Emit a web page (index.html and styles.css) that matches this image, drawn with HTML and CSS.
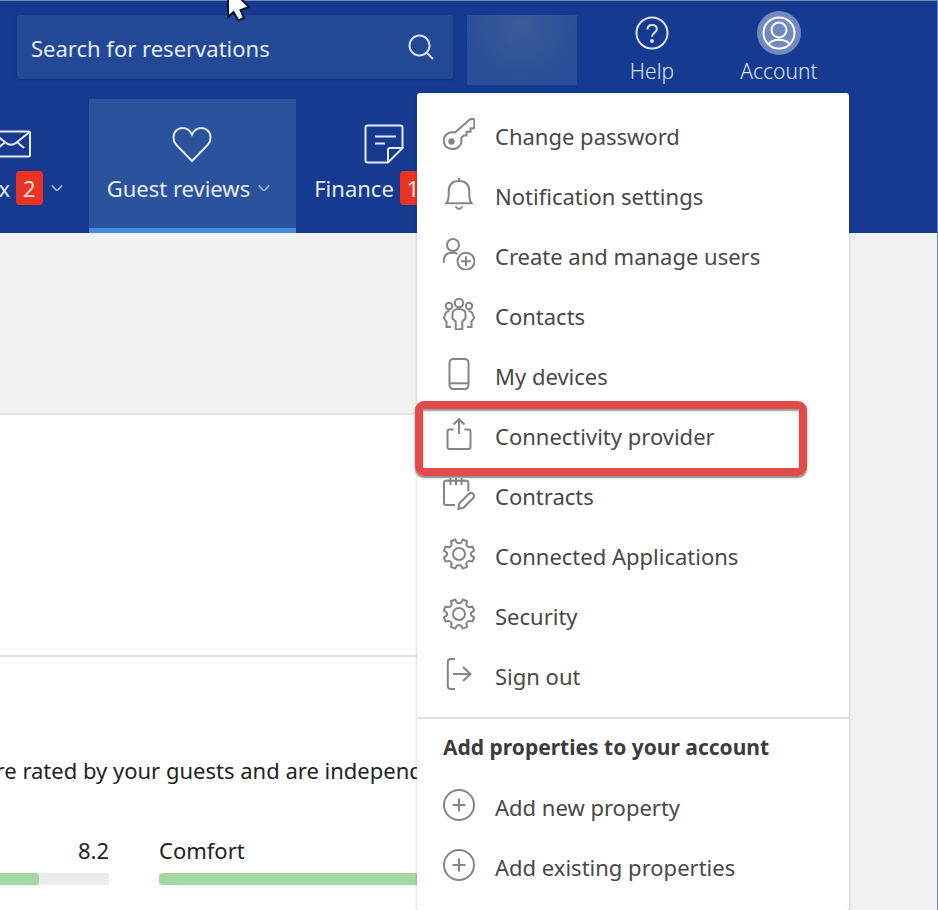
FILE: index.html
```html
<!DOCTYPE html>
<html lang="en">
<head>
<meta charset="utf-8">
<meta name="viewport" content="width=device-width, initial-scale=1">
<title>Guest reviews</title>
<link rel="stylesheet" href="styles.css">
</head>
<body>
<svg class="defs" aria-hidden="true">
  <symbol id="gear" viewBox="0 0 32 32">
    <path d="M12.200 1.500L13.800 4.600Q16 5.700 18.200 4.600L19.800 1.500L24 3.200L23.300 6.500Q23.800 8.600 26 9.200L29.500 8.700L31.200 12.600L28.500 14.400Q27.200 16 28.500 17.700L31.200 19.500L29.500 23.400L26 22.900Q23.900 23.400 23.300 25.500L24 28.900L19.800 30.600L18.200 27.800Q16 26.400 13.800 27.800L12.200 30.600L8 28.900L8.700 25.500Q8.100 23.400 6 22.900L2.500 23.400L.8 19.500L3.500 17.700Q4.800 16 3.500 14.400L.8 12.600L2.500 8.700L6 9.200Q8.200 8.600 8.700 6.500L8 3.200Z"/>
    <circle cx="16" cy="16" r="6"/>
  </symbol>
  <symbol id="plus" viewBox="0 0 32 32">
    <circle cx="16" cy="16" r="15"/><path d="M9.500 16h13M16 9.500v13"/>
  </symbol>
  <symbol id="chevron" viewBox="0 0 14 8"><path d="M1 1L5.500 5.800Q7 7.200 8.500 5.800L13 1"/></symbol>
</svg>

<header class="header">
  <div class="topbar">
    <form class="search" role="search">
      <input class="search-input" type="search" aria-label="Search for reservations" placeholder="Search for reservations">
      <button class="search-button" type="button" aria-label="Search">
        <svg class="search-icon" viewBox="0 0 26 26"><circle cx="11.500" cy="11.500" r="10"/><path d="M18.500 18.500l6.500 6.500"/></svg>
      </button>
    </form>
    <div class="property"></div>
    <a class="tool help" href="#">
      <span class="tool-icon"><svg viewBox="0 0 34 34"><circle cx="17" cy="17" r="15.500"/><path d="M12.500 13.500C12.500 10.500 14 9 17 9s4.800 1.800 4.800 4.200c0 3.500-4.800 3.800-4.800 7.600"/><circle class="solid" cx="17" cy="25" r="1"/></svg></span>
      <span>Help</span>
    </a>
    <div class="account">
      <button class="tool" type="button" aria-expanded="true">
        <span class="tool-icon tool-icon-active"><svg viewBox="0 0 34 34"><circle cx="17" cy="17" r="15.500"/><circle cx="17" cy="14" r="7.500"/><path d="M6.500 28C9 24.800 13 23.800 17 23.800s8 1 10.500 4.200"/></svg></span>
        <span>Account</span>
      </button>
      <div class="menu">
        <ul class="menu-list">
          <li><a class="item" href="#"><svg class="item-icon" viewBox="0 0 32 32"><path d="M12 14.500L26.500 1.800Q28 .7 30 1Q31.300 1.400 31.300 3V10.200H27.500V13.800H23.500V17.500H20.500L18.200 20Q19.500 27 14 30Q8 32.500 3.500 29Q-1 24.500 1.600 18.800Q5 13.200 12 14.500Z"/><circle class="blob" cx="8.500" cy="23.500" r="2.200"/></svg>Change password</a></li>
          <li><a class="item" href="#"><svg class="item-icon" viewBox="0 0 32 32"><path d="M3.500 25.200H28.500Q26.300 22.500 26.300 16V13.500Q26.300 3 16 3T5.700 13.500V16Q5.700 22.500 3.500 25.200ZM16 0v3M12.500 28.500Q16 33.500 19.500 28.500"/></svg>Notification settings</a></li>
          <li><a class="item" href="#"><svg class="item-icon" viewBox="0 0 32 32"><circle cx="10" cy="7" r="6"/><path d="M.8 25V22.500Q1 14.800 9.500 14.800Q12.500 14.800 14.500 16"/><circle cx="23" cy="23.200" r="8.500"/><path d="M18 23.200h10M23 18.200v10"/></svg>Create and manage users</a></li>
          <li><a class="item" href="#"><svg class="item-icon" viewBox="0 0 32 32"><circle cx="16" cy="5" r="4.200"/><circle cx="6" cy="8" r="3.200"/><circle cx="26" cy="8" r="3.200"/><path d="M12.700 31.200V23.500L9.500 20.500V16Q9.500 11 16 11t6.500 5v4.500l-3.200 3v7.700ZM6.500 13Q2.500 13.500 2 17L.8 20l2.700 3.500V29H8M25.500 13Q29.500 13.500 30 17l1.200 3-2.700 3.500V29H24"/></svg>Contacts</a></li>
          <li><a class="item" href="#"><svg class="item-icon" viewBox="0 0 32 32"><rect x="6.500" y=".9" width="19" height="30.200" rx="4"/><path d="M6.500 25.300h19"/></svg>My devices</a></li>
          <li class="highlighted"><a class="item" href="#"><svg class="item-icon" viewBox="0 0 32 32"><path d="M10.500 11.500H6.500Q4.500 11.500 4.500 13.500V29Q4.500 31 6.500 31h19Q27.500 31 27.500 29V13.500Q27.500 11.500 25.500 11.500h-4M16 16V1.200M10.500 6.500L16 1.200l5.500 5.300"/></svg>Connectivity provider</a></li>
          <li><a class="item" href="#"><svg class="item-icon" viewBox="0 0 32 32"><path d="M25.300 13V4.500Q25.300 2.800 23.500 2.800H2.800Q1 2.800 1 4.500V25Q1 27 3 27H12M7.500 0v7M13 0v7M18.500 0v7M15.500 31L16.200 25.500L26 15.700Q28 14 30 15.700T30.300 20L20.500 29.800Z"/></svg>Contracts</a></li>
          <li><a class="item" href="#"><svg class="item-icon"><use href="#gear"/></svg>Connected Applications</a></li>
          <li><a class="item" href="#"><svg class="item-icon"><use href="#gear"/></svg>Security</a></li>
          <li><a class="item" href="#"><svg class="item-icon" viewBox="0 0 32 32"><path d="M12 1H8Q4.800 1 4.800 4V28Q4.800 31 8 31h4M10 16H27M20 9l7.500 7-7.500 7"/></svg>Sign out</a></li>
        </ul>
        <section class="menu-section">
          <h2 class="menu-title">Add properties to your account</h2>
          <ul class="menu-list">
            <li><a class="item" href="#"><svg class="item-icon"><use href="#plus"/></svg>Add new property</a></li>
            <li><a class="item" href="#"><svg class="item-icon"><use href="#plus"/></svg>Add existing properties</a></li>
          </ul>
        </section>
      </div>
    </div>
  </div>
  <nav class="tabs">
    <a class="tab" href="#">
      <svg class="tab-icon" viewBox="0 0 40 40"><rect x="1" y="7.500" width="38" height="25" rx="1.500"/><path d="M2 8.500l12.500 10q5.500 4.500 11 0L38 8.500M7 24l7.500-6M33 24l-7-6"/></svg>
      <span class="tab-label">Inbox <span class="badge">2</span><svg class="chevron"><use href="#chevron"/></svg></span>
    </a>
    <a class="tab tab-active" href="#" aria-current="page">
      <svg class="tab-icon" viewBox="0 0 40 40"><path d="M20 37L4 20.500Q1.500 17.800 1.500 13.500C1.500 7.500 6 4 10.500 4C15 4 18 6.500 20 10.500C22 6.500 25 4 29.500 4C34 4 38.500 7.500 38.500 13.500Q38.500 17.800 36 20.500Z"/></svg>
      <span class="tab-label">Guest reviews<svg class="chevron"><use href="#chevron"/></svg></span>
    </a>
    <a class="tab" href="#">
      <svg class="tab-icon" viewBox="0 0 40 40"><path d="M38.500 24V3.500Q38.500 1.500 36.500 1.500H3.500Q1.500 1.500 1.500 3.500V36.500Q1.500 38.500 3.500 38.500H24L38.500 24H26Q24 24 24 26V38.500M11 12.500H32M11 19.500H21"/></svg>
      <span class="tab-label">Finance <span class="badge">1</span><svg class="chevron"><use href="#chevron"/></svg></span>
    </a>
  </nav>
</header>

<main class="page">
  <div class="card">
    <div class="card-top"></div>
    <section class="scores">
      <p class="intro">Scores are rated by your guests and are independent</p>
      <div class="score-grid">
        <div class="score"><div class="score-head"><span></span><span>8.2</span></div><div class="bar"><div class="fill" style="width:82%"></div></div></div>
        <div class="score"><div class="score-head"><span>Comfort</span><span></span></div><div class="bar"><div class="fill" style="width:84%"></div></div></div>
      </div>
    </section>
  </div>
</main>
<svg class="cursor" viewBox="0 0 24 22" aria-hidden="true"><path d="M1 -8V17L6.500 12L11.500 20.500L17 18L13.500 10L22 7L7 -8Z"/></svg>
</body>
</html>
```
FILE: styles.css
```css
* { box-sizing: border-box; }

html { height: 100%; }

body {
  margin: 0;
  min-height: 100%;
  display: flex;
  flex-direction: column;
  overflow: hidden;
  background: #f1f1f1;
  border-top: 1px solid #7288ad;
  border-right: 1px solid #6f86b5;
  color: #2b2b2b;
  font: 22px/30px "Noto Sans", "Open Sans", sans-serif;
}

a { color: inherit; text-decoration: none; }
svg { fill: none; stroke: currentColor; stroke-width: 2; flex: none; }
ul { list-style: none; margin: 0; padding: 0; }
.defs { position: absolute; width: 0; height: 0; }

.header { background: #163a90; color: #e6ebf5; }

.topbar {
  display: flex;
  align-items: flex-start;
  padding: 14px 108px 0 17px;
  height: 98px;
}

.search {
  display: flex;
  align-items: center;
  flex: 0 1 436px;
  height: 64px;
  padding: 0 19px 0 14px;
  background: #234896;
  border-radius: 3px;
  box-shadow: 0 1px 3px #12358a;
}
.search-input {
  flex: 1;
  min-width: 0;
  padding: 2px 0 0;
  border: 0;
  outline: 0;
  background: none;
  color: inherit;
  font: inherit;
}
.search-input::placeholder { color: #e6ebf5; opacity: 1; }
.search-button { display: flex; padding: 0; border: 0; background: none; color: #d5ddef; }
.search-icon { width: 26px; height: 26px; }

.property {
  width: 110px;
  height: 70px;
  margin-left: 14px;
  background: radial-gradient(circle at 50% 15%, #3b5b98, #2d5099 60%, #2a4c9a);
}

.tool {
  display: flex;
  flex-direction: column;
  align-items: center;
  width: 100px;
  padding: 0;
  border: 0;
  background: none;
  color: #dce3f2;
  font: 300 21px/32px "Noto Sans", "Open Sans", sans-serif;
}
.help { margin-left: auto; }
.tool-icon { display: flex; margin: -4px 0 0; padding: 5px; border-radius: 50%; }
.tool-icon-active { background: #7089be; color: #fff; }
.tool-icon svg { width: 34px; height: 34px; }
.solid { fill: currentColor; }

.account { position: relative; margin-left: 27px; }

.menu {
  position: absolute;
  top: 78px;
  right: -20px;
  z-index: 2;
  width: 432px;
  padding: 14px 0 12px;
  background: #fff;
  border-radius: 3px;
  box-shadow: 0 1px 3px rgba(0, 0, 0, .25);
  color: #484848;
}
.item {
  display: flex;
  gap: 20px;
  height: 60px;
  padding: 11px 26px;
  line-height: 36px;
}
.item-icon { width: 32px; height: 32px; color: #858585; }
.blob { fill: currentColor; }

.highlighted { position: relative; z-index: 1; }
.highlighted::after {
  content: "";
  position: absolute;
  inset: -6px 42px -9px -2px;
  border: 8px solid #e04c47;
  border-radius: 9px;
  box-shadow: 0 2px 2px #888, inset 0 2px 2px #999;
  pointer-events: none;
}

.menu-section { margin-top: 10px; padding-top: 12px; border-top: 2px solid #e2e2e2; }
.menu-title { margin: 0 26px 15px; color: #3c3c3c; font-size: 21px; line-height: 32px; }

.tabs { display: flex; margin-left: -67px; }
.tab {
  display: flex;
  flex-direction: column;
  align-items: center;
  gap: 7px;
  height: 134px;
  padding: 25px 18px 0;
}
.tab-active { background: #2b529c; border-bottom: 5px solid #4489dc; }
.tab-icon { width: 40px; height: 40px; }
.tab-label { display: flex; align-items: center; gap: 6px; line-height: 34px; }
.badge {
  padding: 0 7px;
  border-radius: 4px;
  background: #ea3423;
  color: #fbe3e6;
}
.chevron { width: 12px; height: 8px; margin: 0 8px 0 2px; color: #9fb2d8; }
.chevron use { width: 12px; height: 8px; }

.page { flex: 1; display: flex; padding-top: 180px; }
.card {
  flex: 0 1 583px;
  min-width: 0;
  background: #fff;
  border-top: 2px solid #e2e2e2;
}
.card-top { height: 240px; }
.scores { padding-top: 98px; border-top: 2px solid #e0e0e0; color: #222; }
.intro { margin: 0 0 50px -90px; white-space: nowrap; }
.score-grid {
  display: grid;
  grid-template-columns: 390px 500px;
  gap: 50px;
  margin-left: -281px;
}
.score-head { display: flex; justify-content: space-between; }
.bar { height: 12px; margin-top: 8px; overflow: hidden; border-radius: 3px; background: #ececec; }
.fill { height: 100%; border-radius: 3px; background: #a3d7a3; }

.cursor {
  position: absolute;
  top: 0;
  left: 227px;
  z-index: 3;
  width: 24px;
  height: 22px;
  fill: #fff;
  stroke: #0a1533;
}
```
